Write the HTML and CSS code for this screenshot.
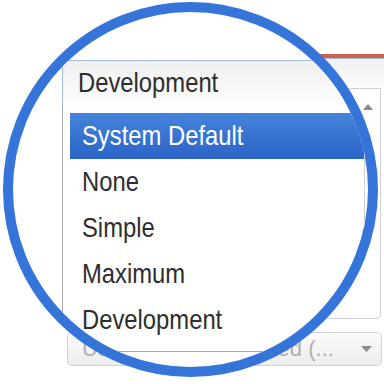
FILE: index.html
```html
<!DOCTYPE html>
<html lang="en">
<head>
    <meta charset="UTF-8">
    <meta name="viewport" content="width=device-width, initial-scale=1.0">
    <title>Logging Level</title>
    <link rel="stylesheet" href="styles.css">
</head>
<body>

    <div class="screen">
        <div class="backdrop">
            <div class="accent"></div>
            <div class="combo-edge"></div>
            <div class="textbox">
                <div class="scroll">
                    <svg width="10" height="6" viewBox="0 0 10 6"><path d="M0 6L5 0L10 6Z"/></svg>
                </div>
            </div>
            <div class="select-muted">
                <span>Use Default Restricted (...</span>
                <svg width="11" height="6" viewBox="0 0 11 6"><path d="M0 0H11L5.5 6Z"/></svg>
            </div>
        </div>

        <!-- magnifier ring over the page -->
        <div class="lens">
            <div class="zoomed">
                <div class="combo"><span>Development</span></div>
                <ul class="options">
                    <li class="selected"><span>System Default</span></li>
                    <li><span>None</span></li>
                    <li><span>Simple</span></li>
                    <li><span>Maximum</span></li>
                    <li><span>Development</span></li>
                </ul>
            </div>
        </div>
    </div>

</body>
</html>
```

FILE: styles.css
```css
body {
    margin: 0;
    background: #fff;
    font-family: "Liberation Sans", Arial, sans-serif;
}
.screen {
    position: relative;
    width: 384px;
    height: 384px;
    overflow: hidden;
}
.backdrop {
    padding-top: 54px;
}
.accent {
    height: 4px;
    margin-left: 300px;
    background: #d6604e;
}
.combo-edge {
    height: 30px;
    margin-left: 62px;
    box-sizing: border-box;
    border-top: 1px solid #a4bfe6;
    background: linear-gradient(#f0f0f0, #fbfbfb);
}
.textbox {
    height: 231px;
    margin: 0 3px 0 200px;
    box-sizing: border-box;
    border: 1px solid #cfcfcf;
    border-radius: 0 0 5px 5px;
    display: flex;
    justify-content: flex-end;
}
.scroll {
    padding: 15px 7px 0 0;
}
.scroll svg {
    display: block;
    fill: #8a8a8a;
}
.select-muted {
    height: 34px;
    margin: 13px 2px 0 67px;
    box-sizing: border-box;
    border: 1px solid #d2d2d2;
    border-radius: 5px;
    background: linear-gradient(#fbfbfb, #ededed);
    display: flex;
    align-items: center;
    justify-content: space-between;
    padding: 0 9px 0 14px;
    color: #b0b0b0;
    font-size: 22px;
    white-space: nowrap;
}
.select-muted svg {
    fill: #8d8d8d;
}
.lens {
    position: absolute;
    left: 3px;
    top: 2px;
    width: 375px;
    height: 375px;
    box-sizing: border-box;
    border: 10px solid #3574d8;
    border-radius: 50%;
    overflow: hidden;
    background: #fff;
}
.zoomed {
    width: 352px;
    box-sizing: border-box;
    padding: 48px 0 0 49px;
    font-size: 28px;
    color: #2e2e2e;
    white-space: nowrap;
}
.zoomed span {
    display: inline-block;
    transform: scaleX(0.85);
    transform-origin: 0 50%;
}
.combo {
    height: 46px;
    margin-right: -40px;
    box-sizing: border-box;
    padding: 6px 0 0 15px;
    border-top: 1px solid #a4bfe6;
    border-left: 1px solid #a4bfe6;
    background: linear-gradient(#efefef, #fdfdfd);
}
.options {
    list-style: none;
    margin: 0;
    padding: 7px 0 8px 7px;
    border: 1px solid #a9a9a9;
    border-top: none;
    border-right-color: #cfcfcf;
}
.options li {
    height: 46px;
    line-height: 46px;
    padding-left: 12px;
}
.options .selected {
    background: linear-gradient(#4584dc, #2b64c6);
    color: #fff;
}
```
